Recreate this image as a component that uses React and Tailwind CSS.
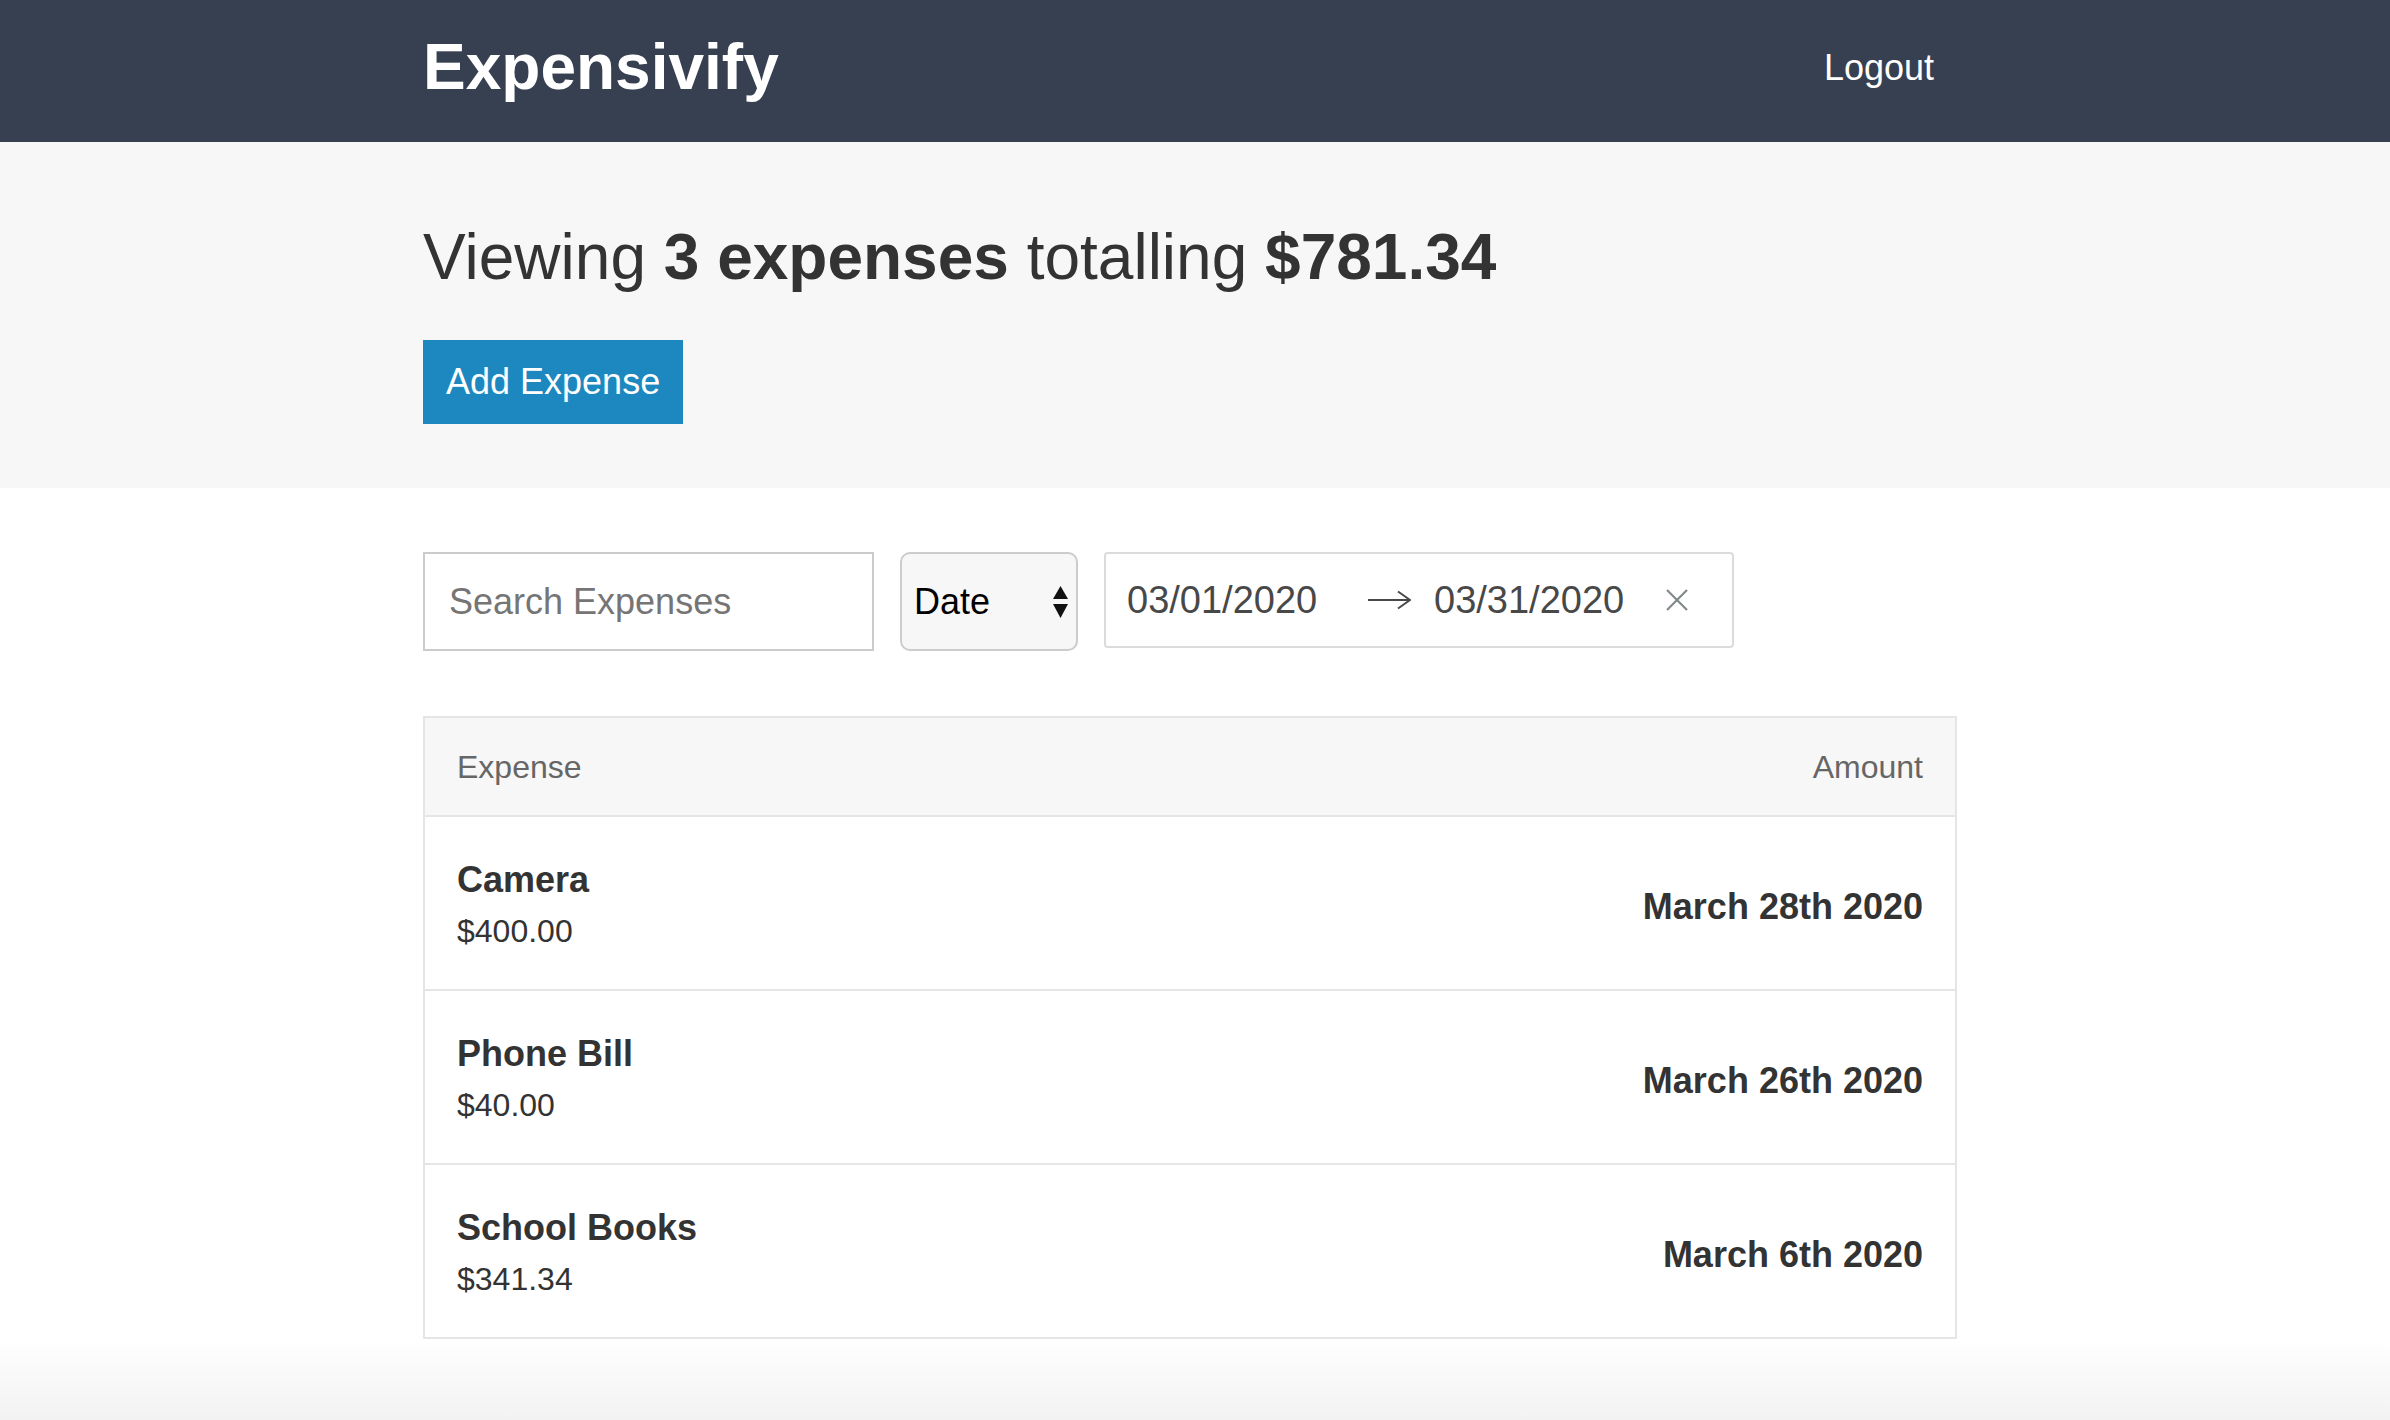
import React from 'react';

// Expense rows shown in the list
const expenses = [
  { id: 'a1', description: 'Camera', amount: '$400.00', date: 'March 28th 2020' },
  { id: 'a2', description: 'Phone Bill', amount: '$40.00', date: 'March 26th 2020' },
  { id: 'a3', description: 'School Books', amount: '$341.34', date: 'March 6th 2020' },
];

const SortArrows = () => (
  <svg width="15" height="32" viewBox="0 0 15 32" className="shrink-0">
    <polygon points="7.5,0 15,13 0,13" fill="#111" />
    <polygon points="0,18 15,18 7.5,32" fill="#111" />
  </svg>
);

const RangeArrow = () => (
  <svg width="44" height="20" viewBox="0 0 44 20" fill="none" stroke="#484848" strokeWidth="2" className="shrink-0">
    <line x1="1" y1="10" x2="43" y2="10" />
    <polyline points="31,1.5 43,10 31,18.5" />
  </svg>
);

const ClearIcon = () => (
  <svg width="22" height="22" viewBox="0 0 22 22" stroke="#82888a" strokeWidth="2.2" className="shrink-0">
    <line x1="1" y1="1" x2="21" y2="21" />
    <line x1="21" y1="1" x2="1" y2="21" />
  </svg>
);

const ExpenseRow = ({ expense }) => (
  <div className="h-[174px] border-t-2 border-[#e5e5e5] px-[32px] flex items-center justify-between">
    <div className="flex flex-col pt-[3px]">
      <h3 className="text-[36px] leading-[40px] font-bold mb-[13px]">{expense.description}</h3>
      <span className="text-[32px] leading-[36px]">{expense.amount}</span>
    </div>
    <h3 className="text-[36px] leading-[40px] font-bold mt-[8px]">{expense.date}</h3>
  </div>
);

export default function App() {
  return (
    <div className="min-h-[1420px] flex flex-col bg-white text-[#333] font-['Liberation_Sans',Arial,sans-serif]">
      {/* Header */}
      <header className="bg-[#364051] h-[142px] pr-[10px] shrink-0">
        <div className="mx-auto w-[1534px] h-full flex items-center justify-between">
          <h1 className="text-[64px] leading-none font-bold text-white pb-[8px]">Expensivify</h1>
          <button className="text-[36px] leading-none text-white pr-[23px] pb-[7px]">Logout</button>
        </div>
      </header>

      {/* Summary */}
      <section className="bg-[#f7f7f7] pr-[10px] pt-[83px] pb-[64px]">
        <div className="mx-auto w-[1534px]">
          <h2 className="text-[64px] leading-none font-normal">
            Viewing <span className="font-bold">3 expenses</span> totalling <span className="font-bold">$781.34</span>
          </h2>
          <button className="mt-[51px] h-[84px] px-[23px] bg-[#1c88bf] text-white text-[36px] leading-none">
            Add Expense
          </button>
        </div>
      </section>

      {/* Filters + list */}
      <section className="pr-[10px] pt-[64px]">
        <div className="mx-auto w-[1534px]">
          <div className="flex items-start gap-[26px]">
            <input
              type="text"
              placeholder="Search Expenses"
              className="w-[451px] h-[99px] border-2 border-[#cacccd] px-[24px] text-[36px] text-[#333] placeholder:text-[#757575] outline-none"
            />
            <div className="w-[178px] h-[99px] border-2 border-[#cacccd] rounded-[10px] bg-[#f7f7f7] flex items-center pl-[12px] pr-[8px]">
              <select className="appearance-none bg-transparent flex-1 text-[36px] text-black outline-none">
                <option>Date</option>
                <option>Amount</option>
              </select>
              <SortArrows />
            </div>
            <div className="w-[630px] h-[96px] border-2 border-[#dbdbdb] rounded-[4px] bg-white flex items-center pl-[21px] text-[38px] leading-none text-[#484848]">
              <span className="w-[240px]">03/01/2020</span>
              <RangeArrow />
              <span className="w-[232px] ml-[23px]">03/31/2020</span>
              <ClearIcon />
            </div>
          </div>

          <div className="mt-[65px] border-2 border-t-0 border-[#e5e5e5]">
            <div className="h-[99px] border-t-2 border-[#e5e5e5] bg-[#f7f7f7] px-[32px] flex items-center justify-between text-[32px] text-[#666]">
              <span>Expense</span>
              <span>Amount</span>
            </div>
            {expenses.map((expense) => (
              <ExpenseRow key={expense.id} expense={expense} />
            ))}
          </div>
        </div>
      </section>

      <div className="flex-1 min-h-[80px] bg-linear-to-b from-white to-[#f2f2f2]" />
    </div>
  );
}
